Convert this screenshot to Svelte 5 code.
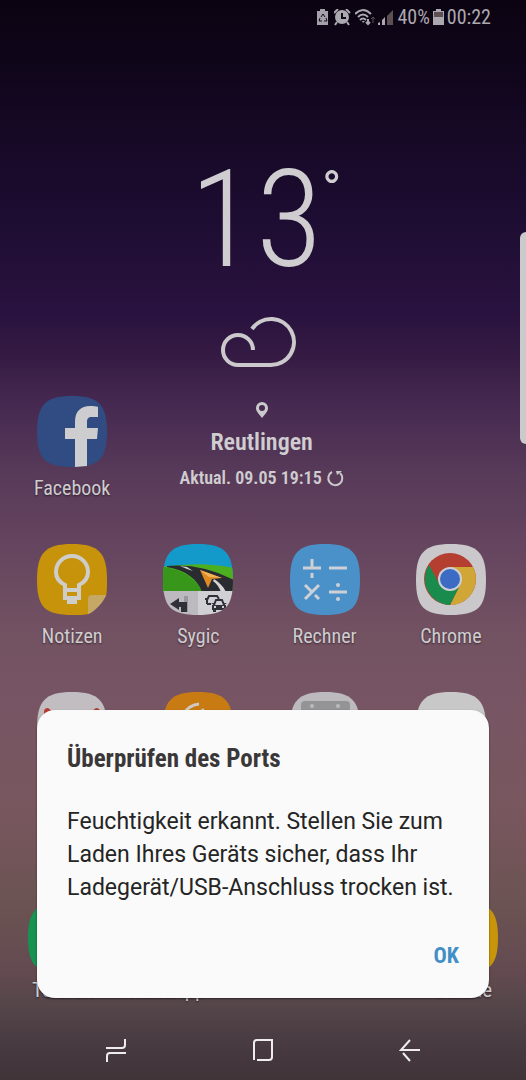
<script>
  let { temperature = 13, city = 'Reutlingen', updated = '09.05 19:15' } = $props();

  let open = $state(true);

  const apps = [
    { id: 'notes', label: 'Notizen' },
    { id: 'sygic', label: 'Sygic' },
    { id: 'calc', label: 'Rechner' },
    { id: 'chrome', label: 'Chrome' },
    { id: 'mail' },
    { id: 'music' },
    { id: 'calendar' },
    { id: 'blank' }
  ];

  const dock = [
    { color: '#15934f', label: 'Telefon' },
    { color: '#15934f', label: 'WhatsApp' },
    null,
    null,
    { color: '#c8950a', label: 'Galerie' }
  ];

  // rounded "squircle" shared by all launcher icons, 72x72
  const shape = 'M36 0C63 0 71 9 71 36S63 71 36 71 1 63 1 36 9 0 36 0Z';
</script>

<svelte:head>
  <title>Startbildschirm</title>
</svelte:head>

{#snippet art(id)}
  {#if id === 'facebook'}
    <path d={shape} fill="#304c82" />
    <path d="M39 71V43H29V32h10v-6c0-11 6-16 15-16 3 0 6 0 8 1v10h-6c-4 0-5 2-5 5v6h11l-1 11H51v27Z" fill="#cdcdd0" />
  {:else if id === 'notes'}
    <path d="M36 0C63 0 71 9 71 36 71 43 71 48 70 52L53 70C49 71 43 71 36 71 9 71 1 63 1 36S9 0 36 0Z" fill="#c7930b" />
    <path d="M29 45v-4C23 38 20 34 20 28a16 16 0 0 1 32 0c0 6-3 10-9 13v4M27 46h18M29 46v8h14v-8" fill="none" stroke="#cecdca" stroke-width="4" />
    <path d="M31 54h10v6H31Z" fill="#cecdca" />
    <path d="M52 70V55q0-4 4-4h14q-2 6-8 12T52 70Z" fill="#c5a866" />
  {:else if id === 'sygic'}
    <clipPath id="sygic-clip"><path d={shape} /></clipPath>
    <g clip-path="url(#sygic-clip)">
      <path d="M0 0h72v48H0Z" fill="#139aca" />
      <path d="M0 23Q40 17 72 24v24H0Z" fill="#4caf20" />
      <path d="M0 23q28 3 40 24H0Z" fill="#38961a" />
      <path d="M5 22q34-3 67 14v12H40C36 36 24 26 5 23Z" fill="#292b31" />
      <path d="M18 22l7 1 6 4-6-2ZM52 35c5 3 9 7 12 13h-5c-2-5-4-8-8-11Z" fill="#d4d4d4" />
      <path d="M38 26l22 8-10 1-4 9Z" fill="#df8b22" />
      <path d="M38 26l22 8-13-1Z" fill="#f0b55a" />
      <path d="M0 47h36v25H0Z" fill="#bcbabe" />
      <path d="M36 47h36v25H36Z" fill="#d0cfd3" />
      <path d="M22 52h4v16h-4Z" fill="#97979e" />
      <path d="M8 60l9-6v4h8v10h-6v-5h-2v3Z" fill="#30303a" />
      <path d="M45 60v-4l2-4h8l2 3M43 55h3M45 60h4" fill="none" stroke="#30303a" stroke-width="2" />
      <path d="M52 61l2-5h6l2 5" fill="#d0cfd3" stroke="#30303a" stroke-width="2" />
      <path d="M50 61h14v5h-1v2h-3v-2h-6v2h-3v-2h-1ZM49 59h3v2ZM65 59h-3v2Z" fill="#30303a" />
      <path d="M52 62h2v2h-2ZM60 62h2v2h-2Z" fill="#d0cfd3" />
    </g>
  {:else if id === 'calc'}
    <path d={shape} fill="#4a91c9" />
    <path d="M14 24h18M23 15v10m0 4v5M40 24h18M16 41l8 8m2 2l4 4M30 41l-14 14M40 48h18" fill="none" stroke="#cdd0d4" stroke-width="3" />
    <circle cx="49" cy="41" r="2" fill="#cdd0d4" />
    <circle cx="49" cy="55" r="2" fill="#cdd0d4" />
  {:else if id === 'chrome'}
    <path d={shape} fill="#cac8cb" />
    <circle cx="35" cy="35" r="26" fill="#b43f31" />
    <path d="M35 23H58A26 26 0 0 1 35 61L45 41Z" fill="#d0a637" />
    <path d="M14 21A26 26 0 0 0 35 61L45 41H25Z" fill="#188b4d" />
    <circle cx="35" cy="35" r="12" fill="#cfced2" />
    <circle cx="35" cy="35" r="10" fill="#3c6bc4" />
  {:else if id === 'mail'}
    <path d={shape} fill="#c1bdc0" />
    <path d="M8 20q0-4 4-4l24 18 24-18q4 0 4 4v34H8Z" fill="#b83b2f" />
  {:else if id === 'music'}
    <path d={shape} fill="#c97b13" />
    <path d="M20 24Q26 13 37 12M40 17l4 6" fill="none" stroke="#d0cac2" stroke-width="3" />
  {:else if id === 'calendar'}
    <path d={shape} fill="#bdbabd" />
    <rect x="12" y="9" width="49" height="50" rx="4" fill="#949396" />
    <circle cx="23" cy="14" r="2" fill="#bdbabd" />
    <circle cx="49" cy="14" r="2" fill="#bdbabd" />
  {:else}
    <path d={shape} fill="#c8c8c8" />
  {/if}
{/snippet}

{#snippet app(id, label)}
  <button class="app" aria-label={label ?? id}>
    <svg class="icon" viewBox="0 0 72 72" aria-hidden="true">{@render art(id)}</svg>
    {#if label}<span>{label}</span>{/if}
  </button>
{/snippet}

<div class="phone">
  <header class="status">
    <svg width="14" height="17" viewBox="0 0 14 17" aria-hidden="true">
      <path d="M3 2V0h5v2h3v14H0V2Z" fill="#a5a1aa" />
      <path d="M4 8l2-3 2 3M9 9l1 3H7M5 12H2l1-3" fill="none" stroke="#120918" />
    </svg>
    <svg width="18" height="17" viewBox="0 0 18 17" aria-hidden="true">
      <circle cx="8" cy="8" r="7" fill="#aca8b0" />
      <path d="M0 4l4-4M12 0l4 4M3 13l-2 3M13 13l2 3" stroke="#aca8b0" stroke-width="2" />
      <path d="M8 4v5h4" fill="none" stroke="#120918" stroke-width="2" />
    </svg>
    <svg width="20" height="17" viewBox="0 0 20 17" aria-hidden="true">
      <path d="M0 5q8-8 16 0M3 8q5-5 10 0M5 11q3-3 6 0" fill="none" stroke="#aca8b0" stroke-width="2" />
      <path d="M7 12h3l-2 2Z" fill="#aca8b0" />
      <path d="M13 10v5m-2-2l2 2 2-2" fill="none" stroke="#aca8b0" stroke-width="2" />
      <path d="M18 14V8m-2 2l2-2 2 2" fill="none" stroke="#5d5053" />
    </svg>
    <svg width="16" height="17" viewBox="0 0 16 17" aria-hidden="true">
      <path d="M0 16v-2l2-1v3ZM4 16v-5l3-3v8Z" fill="#aca8b0" />
      <path d="M9 16V7l6-6v15Z" fill="#5d5053" />
    </svg>
    <span>40%</span>
    <svg width="11" height="17" viewBox="0 0 11 17" aria-hidden="true">
      <path d="M3 2V0h5v2h3v14H0V2Z" fill="#aca8b0" />
      <path d="M1 3h9v5H1Z" fill="#5d5053" />
    </svg>
    <time>00:22</time>
  </header>

  <main>
    <section class="top">
      <div class="left">{@render app('facebook', 'Facebook')}</div>
      <div class="weather">
        <div class="temp"><span>{temperature}</span><span class="degree">°</span></div>
        <svg class="cloud" width="82" height="52" viewBox="0 0 82 52" aria-label="Bewölkt">
          <path d="M32 34A15 15 0 1 0 17 49H50A23 23 0 1 0 31 13" fill="none" stroke="#cbc9cc" stroke-width="4" />
        </svg>
        <svg class="pin" width="14" height="16" viewBox="0 0 14 16" aria-hidden="true">
          <path d="M7 16C3 11 1 9 1 6a6 6 0 0 1 12 0c0 3-2 5-6 10ZM7 3a3 3 0 1 0 0 6 3 3 0 0 0 0-6Z" fill="#cbc9cc" fill-rule="evenodd" />
        </svg>
        <div class="city">{city}</div>
        <button class="refresh">
          Aktual. {updated}
          <svg width="18" height="18" viewBox="0 0 18 18" aria-hidden="true">
            <path d="M6 3a7 7 0 1 0 8 1" fill="none" stroke="#cbc9cc" stroke-width="2" />
            <path d="M10 2h6l-5 4Z" fill="#cbc9cc" />
          </svg>
        </button>
      </div>
    </section>

    <section class="grid">
      {#each apps as a}
        {@render app(a.id, a.label)}
      {/each}
    </section>
  </main>

  <section class="dock">
    {#each dock as d}
      {#if d}
        <button class="app">
          <svg class="icon" viewBox="0 0 72 72" aria-hidden="true"><path d={shape} fill={d.color} /></svg>
          <span>{d.label}</span>
        </button>
      {:else}
        <div></div>
      {/if}
    {/each}
  </section>

  <nav>
    <button aria-label="Letzte Apps">
      <svg width="22" height="24" viewBox="0 0 22 24"><path d="M1 10h16q3 0 3-3V1M21 15H5q-3 0-3 3v6" /></svg>
    </button>
    <button aria-label="Start">
      <svg width="22" height="24" viewBox="0 0 22 24"><path d="M2 22V5q0-3 3-3h15v17q0 3-3 3H5" /></svg>
    </button>
    <button aria-label="Zurück">
      <svg width="22" height="24" viewBox="0 0 22 24"><path d="M21 12H2L11 2M4 15l7 8" /></svg>
    </button>
  </nav>

  <div class="edge"></div>

  {#if open}
    <div class="dialog" role="alertdialog" aria-labelledby="port-title" aria-describedby="port-text">
      <h1 id="port-title">Überprüfen des Ports</h1>
      <p id="port-text">Feuchtigkeit erkannt. Stellen Sie zum Laden Ihres Geräts sicher, dass Ihr Ladegerät/USB-Anschluss trocken ist.</p>
      <button class="ok" onclick={() => (open = false)}>OK</button>
    </div>
  {/if}
</div>

<style>
  :global(body) { margin: 0; background: #403539; }
  .phone {
    position: relative;
    min-height: 100vh;
    display: flex;
    flex-direction: column;
    overflow: hidden;
    font-family: "Roboto Condensed", "Liberation Sans Narrow", Roboto, sans-serif;
    color: #cfcdd0;
    background: linear-gradient(#0b0311 0%, #12071f 9%, #1c0c30 19%, #29123f 29%, #351b43 33%, #452850 37%, #583a59 44%, #66465f 51%, #735262 59%, #775563 66%, #79575f 74%, #6b5353 84%, #624a50 90%, #55464a 93%, #463a40 97%, #403439 100%);
  }
  button { font: inherit; color: inherit; background: none; border: 0; padding: 0; cursor: pointer; }
  svg { display: block; flex: none; }

  .status { display: flex; align-items: center; justify-content: flex-end; gap: 3px; height: 34px; padding-right: 35px; font-size: 20px; color: #aca8b0; }

  main { flex: 1; padding: 0 12px 0 9px; }
  .top { display: grid; grid-template-columns: 1fr 3fr; height: 510px; }
  .left { display: grid; align-content: end; }
  .weather { display: flex; flex-direction: column; align-items: center; margin-right: 126px; padding-top: 118px; }
  .temp { display: flex; margin-left: 8px; font-weight: 300; font-size: 136px; line-height: 136px; }
  .degree { margin-top: 10px; font-size: 52px; font-weight: 400; line-height: 56px; }
  .cloud { margin-top: 28px; }
  .pin { margin-top: 34px; }
  .city { margin-top: 10px; font-size: 24px; line-height: 28px; font-weight: 600; }
  .refresh { display: flex; align-items: center; gap: 4px; margin-top: 12px; font-size: 18px; line-height: 20px; font-weight: 600; white-space: nowrap; }

  .grid { display: grid; grid-template-columns: repeat(4, 1fr); }
  .app { display: flex; flex-direction: column; align-items: center; gap: 8px; height: 148px; font-size: 20px; line-height: 24px; text-shadow: 0 1px 2px rgba(0, 0, 0, .5); }
  .icon { width: 72px; height: 72px; }

  .dock { display: grid; grid-template-columns: repeat(5, 1fr); padding: 0 13px; }
  .dock .app { height: 118px; gap: 4px; font-size: 21px; }

  nav { display: flex; justify-content: space-around; align-items: center; height: 60px; padding: 0 42px; }
  nav path { fill: none; stroke: #eeecee; stroke-width: 2; }

  .edge { position: absolute; top: 232px; right: 0; width: 6px; height: 212px; background: #cacaca; border-radius: 6px 0 0 6px; }

  .dialog { position: absolute; left: 37px; right: 37px; bottom: 82px; box-sizing: border-box; min-height: 288px; padding: 32px 30px 26px; display: flex; flex-direction: column; background: #fafafa; border-radius: 18px; box-shadow: 0 1px 2px rgba(0, 0, 0, .5); color: #252525; }
  h1 { margin: 0 0 30px; font-size: 25px; line-height: 33px; font-weight: 700; color: #3a3738; }
  p { margin: 0; font-family: Roboto, sans-serif; font-size: 23px; line-height: 33px; }
  .ok { align-self: flex-end; margin-top: auto; font-size: 22px; line-height: 32px; font-weight: 700; color: #428fc6; }
</style>
